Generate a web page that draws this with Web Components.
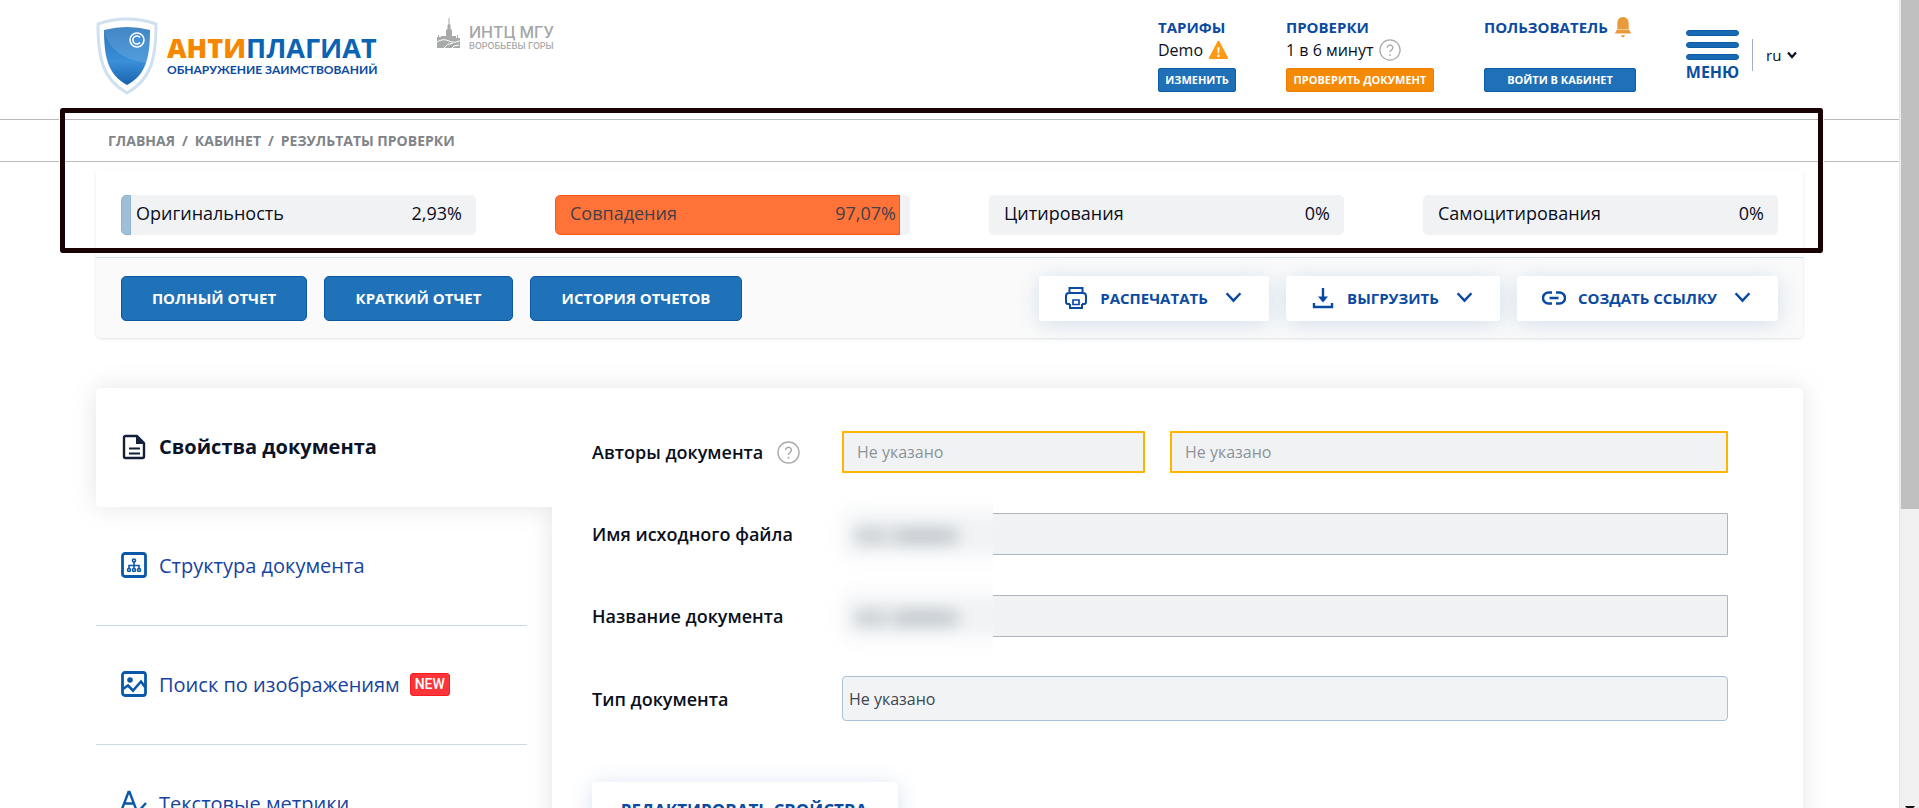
<!DOCTYPE html>
<html lang="ru">
<head>
<meta charset="utf-8">
<title>Антиплагиат — результаты проверки</title>
<style>
html, body { margin: 0; height: 100%; }
body { background: #fff; font-family: "Open Sans", "Noto Sans", sans-serif; color: #0a0f1c; overflow: hidden; }
</style>
</head>
<body>
<ap-page></ap-page>
<script>
function define(name, html, setup) {
  const t = document.createElement('template');
  t.innerHTML = html;
  customElements.define(name, class extends HTMLElement {
    constructor() {
      super();
      this.attachShadow({ mode: 'open' }).append(t.content.cloneNode(true));
    }
    connectedCallback() { if (setup) setup(this, this.shadowRoot); }
  });
}

const ICONS = {
  print: ['0 0 24 24', '<g fill="none" stroke="currentColor" stroke-width="2"><path d="M5.500 7V2h13v5M6 18H4a2 2 0 0 1-2-2v-6a3 3 0 0 1 3-3h14a3 3 0 0 1 3 3v6a2 2 0 0 1-2 2h-2"/><path d="M6 18v4h12v-4"/><path d="M9 14h6v4.500H9z" stroke-width="1.700"/></g>'],
  download: ['0 0 24 24', '<path d="M12 2v13M3 17v4h18v-4" fill="none" stroke="currentColor" stroke-width="2.4"/><path d="M7 10.500h10l-5 6z" fill="currentColor"/>'],
  link: ['0 0 24 24', '<path d="M10 6.500H6.500a5.500 5.500 0 0 0 0 11H10M14 6.500h3.500a5.500 5.500 0 0 1 0 11H14M7.500 12h9" fill="none" stroke="currentColor" stroke-width="2.500"/>'],
  chevron: ['0 0 16 16', '<path d="M1.500 4l6.500 7 6.500-7" fill="none" stroke="currentColor" stroke-width="2.300"/>'],
  caret: ['0 0 10 10', '<path d="M1 2.500l4 4.500 4-4.500" fill="none" stroke="currentColor" stroke-width="2.200"/>'],
  doc: ['0 0 26 26', '<path d="M4.500 2H16l7 7v13.500a1.500 1.500 0 0 1-1.500 1.500h-17A1.500 1.500 0 0 1 3 22.500v-19A1.500 1.500 0 0 1 4.500 2z" fill="none" stroke="currentColor" stroke-width="2.400" stroke-linejoin="round"/><path d="M15 2v8h8zM8 13.500h11v2H8zM8 18.500h11v2H8z" fill="currentColor"/>'],
  tree: ['0 0 26 26', '<rect x="1.500" y="1.500" width="23" height="23" rx="2.500" fill="none" stroke="currentColor" stroke-width="2.800"/><g fill="none" stroke="currentColor" stroke-width="1.600"><circle cx="13" cy="8.500" r="1.500"/><circle cx="8" cy="18" r="1.500"/><circle cx="13" cy="18" r="1.500"/><circle cx="18" cy="18" r="1.500"/><path d="M13 10v6M8 16v-2.500h10V16"/></g>'],
  image: ['0 0 26 26', '<rect x="1.500" y="1.500" width="23" height="23" rx="2.500" fill="none" stroke="currentColor" stroke-width="2.800"/><circle cx="9" cy="9" r="2.800" fill="currentColor"/><path d="M2 18l5-3.500 5 5 8-9 4 5.500" fill="none" stroke="currentColor" stroke-width="2.600"/>'],
  metrics: ['0 0 26 26', '<path d="M1 19L7.500 2h1L15 19M3.500 13.500h9M13 20l3 3 9-10" fill="none" stroke="currentColor" stroke-width="2.400"/>'],
  help: ['0 0 24 24', '<circle cx="12" cy="12" r="11" fill="#fff" stroke="#aaa" stroke-width="1.400"/><path d="M9 9.500a3 3 0 1 1 4.500 2.600c-1 .6-1.500 1.100-1.500 2.400" fill="none" stroke="#aaa" stroke-width="1.500"/><circle cx="12" cy="17.500" r="1" fill="#aaa"/>'],
  warning: ['0 0 22 22', '<path d="M10 1.500q1-1.500 2 0l9.500 18q.5 1.500-1 1.500h-19q-1.500 0-1-1.500z" fill="#ff9914"/><path d="M9.800 8h2.400l-.4 6.500h-1.600z" fill="#fff"/><circle cx="11" cy="17.300" r="1.400" fill="#fff"/>'],
  bell: ['0 0 18 24', '<path d="M9 1c4.500 0 6.200 3.500 6.200 7v6.500L17.500 18v1H.5v-1l2.300-3.500V8C2.800 4.500 4.500 1 9 1z" fill="#e99b3c"/><path d="M2.800 14.800h12.400" stroke="#f6cf9d"/><path d="M6.500 21h5l-2.500 2.500z" fill="#e88a1a"/>']
};

define('ap-icon', `<style>
:host { display: inline-block; width: 24px; height: 24px; flex: none; }
svg { display: block; width: 100%; height: 100%; }
</style><svg aria-hidden="true"></svg>`, (el, root) => {
  const [box, art] = ICONS[el.getAttribute('name')];
  const svg = root.querySelector('svg');
  svg.setAttribute('viewBox', box);
  svg.innerHTML = art;
});

define('ap-logo', `<style>
:host { display: block; }
a { display: flex; align-items: flex-start; gap: 9px; text-decoration: none; }
svg { width: 62px; height: 78px; flex: none; }
.words { padding-top: 15px; white-space: nowrap; width: 210px; }
.name { font-size: 27px; line-height: 32px; font-weight: 700; color: #0b63b3; }
.name b { color: #f58800; }
.tag { font-size: 12px; line-height: 12px; font-weight: 700; color: #0b4aa2; font-family: Lato, "Open Sans", sans-serif; }
</style>
<a href="#">
<svg viewBox="0 0 62 78" aria-hidden="true">
<defs><linearGradient id="g" x1="0" y1="0" x2="0" y2="1"><stop offset="0" stop-color="#2a76bd"/><stop offset=".6" stop-color="#3a8fd8"/><stop offset="1" stop-color="#1763ad"/></linearGradient></defs>
<path d="M31 2Q46 2 60 7C60 40 56 62 31 76C6 62 2 40 2 7Q16 2 31 2Z" fill="#fff" stroke="#cfe1f0" stroke-width="3"/>
<path d="M31 10Q42 10 54 13C54 40 50 58 31 68C12 58 8 40 8 13Q20 10 31 10Z" fill="url(#g)"/>
<path d="M8 15C14 34 30 44 52 46C54 36 54 24 54 13Q42 10 31 10Q20 10 8 13Z" fill="#fff" opacity=".12"/>
<circle cx="41" cy="23" r="7" fill="none" stroke="#fff" stroke-width="1.500"/>
<path d="M44 20.500a4 4 0 1 0 0 5" fill="none" stroke="#fff" stroke-width="1.500"/>
</svg>
<span class="words"><div class="name"><b>АНТИ</b>ПЛАГИАТ</div><div class="tag">ОБНАРУЖЕНИЕ ЗАИМСТВОВАНИЙ</div></span>
</a>`);

define('ap-partner', `<style>
:host { display: flex; gap: 8px; color: #a3a5a6; font-weight: 500; white-space: nowrap; }
svg { width: 24px; height: 31px; }
.a { font-size: 16px; line-height: 18px; padding-top: 5px; }
.b { font-size: 9px; line-height: 10px; }
.w { font-family: Inter, "Open Sans", sans-serif; }
</style>
<svg viewBox="0 0 24 31" aria-hidden="true"><path d="M11.500 0h1v6l1 1v4l1.500 1v6h4v2h1v-3h1v3h2v10H0V19h1v-2h1v2h2v-1h5v-6l1.500-1V7l1-1z" fill="#a7a9aa"/><path d="M0 24q6-4 12-1t12-1M6 31q4-6 10-6M14 31q2-4 8-4" fill="none" stroke="#fff" stroke-width="1"/></svg>
<div class="w"><div class="a">ИНТЦ МГУ</div><div class="b">ВОРОБЬЕВЫ ГОРЫ</div></div>`);

define('ap-account', `<style>
:host { display: block; white-space: nowrap; }
h2 { margin: 0; font-size: 15px; line-height: 20px; font-weight: 700; color: #0b4aa2; display: flex; align-items: center; gap: 6px; height: 20px; }
.info { display: flex; align-items: center; gap: 5px; height: 26px; margin: 0 0 5px; font-size: 16px; }
button { display: block; box-sizing: border-box; width: 100%; height: 24px; padding: 0 6px 1px; border: 1px solid #0b5cab; border-radius: 2px; background: #1f70b7; color: #fff; font: 700 11px "Open Sans", sans-serif; cursor: pointer; }
:host([accent]) button { background: #f58a07; border-color: #ee7d00; }
</style>
<h2><slot name="title"></slot></h2><div class="info"><slot></slot></div><button type="button"></button>`,
(el, root) => { root.querySelector('button').textContent = el.getAttribute('action'); });

define('ap-menu', `<style>
:host { display: flex; align-items: flex-start; }
button { border: 0; background: none; padding: 0; display: flex; flex-direction: column; gap: 5px; width: 53px; font: 700 16px/14px "Open Sans", sans-serif; color: #0b4fa3; cursor: pointer; align-items: center; }
i { display: block; height: 6px; width: 100%; border-radius: 3px; background: #1a69b3; border: 1px solid #0b5cab; box-sizing: border-box; }
i + i { margin-top: 1px; }
.lang { margin: 9px 0 0 13px; border-left: 1px solid #9fb0cc; height: 32px; display: flex; align-items: center; padding-left: 13px; }
select { appearance: none; border: 0; background: none; padding: 0; font: 15px "Open Sans", sans-serif; color: #0a0f1c; width: 21px; }
ap-icon { width: 10px; height: 10px; }
</style>
<button type="button"><i></i><i></i><i></i><span>МЕНЮ</span></button>
<div class="lang"><select aria-label="Язык"><option>ru</option></select><ap-icon name="caret"></ap-icon></div>`);

define('ap-header', `<style>
:host { display: flex; align-items: flex-start; box-sizing: border-box; height: 119px; padding: 17px 96px 0; }
ap-partner { margin: 1px 0 0 60px; }
.right { margin-left: auto; display: flex; }
.tariff { margin-right: 50px; width: 78px; }
.checks { margin-right: 50px; width: 148px; }
.user { margin-right: 50px; width: 152px; }
ap-menu { margin: 13px 6px 0 0; }
.warn { width: 21px; height: 20px; }
.help { width: 22px; height: 22px; }
.bell { width: 18px; height: 22px; }
</style>
<ap-logo></ap-logo><ap-partner></ap-partner>
<div class="right">
<ap-account class="tariff" action="ИЗМЕНИТЬ"><span slot="title">ТАРИФЫ</span>Demo<ap-icon class="warn" name="warning"></ap-icon></ap-account>
<ap-account class="checks" accent action="ПРОВЕРИТЬ ДОКУМЕНТ"><span slot="title">ПРОВЕРКИ</span>1 в 6 минут<ap-icon class="help" name="help"></ap-icon></ap-account>
<ap-account class="user" action="ВОЙТИ В КАБИНЕТ"><span slot="title">ПОЛЬЗОВАТЕЛЬ</span><ap-icon slot="title" class="bell" name="bell"></ap-icon></ap-account>
<ap-menu></ap-menu>
</div>`);

define('ap-breadcrumbs', `<style>
:host { display: block; border: solid #bbbbbf; border-width: 1px 0; }
nav { display: flex; gap: 7px; height: 41px; align-items: center; padding: 0 108px; font-size: 14px; font-weight: 700; color: #808488; white-space: nowrap; }
a { color: inherit; text-decoration: none; }
</style>
<nav aria-label="Путь"><a href="#">ГЛАВНАЯ</a><span>/</span><a href="#">КАБИНЕТ</a><span>/</span><a href="#">РЕЗУЛЬТАТЫ ПРОВЕРКИ</a></nav>`);

define('ap-score', `<style>
:host { display: block; position: relative; height: 40px; border-radius: 5px; background: #f1f2f4; overflow: hidden; flex: 1; }
.fill { position: absolute; inset: 0 auto 0 0; box-sizing: border-box; background: var(--fill, none); border: 1px solid var(--edge, transparent); border-radius: 5px 0 0 5px; }
.row { position: relative; height: 36px; display: flex; justify-content: space-between; align-items: center; padding: 0 14px 0 15px; font-size: 18px; white-space: nowrap; }
:host([tone=match]) .row { color: #43404a; }
</style>
<div class="fill"></div><div class="row"><span><slot></slot></span><span class="v"></span></div>`, (el, root) => {
  root.querySelector('.fill').style.width = el.getAttribute('fill') + '%';
  if (el.getAttribute('fill') === '0') root.querySelector('.fill').style.display = 'none';
  root.querySelector('.v').textContent = el.getAttribute('value');
});

define('ap-button', `<style>
:host { display: block; }
button { display: flex; align-items: center; justify-content: center; box-sizing: border-box; width: 100%; height: 45px; border-radius: 5px; border: 1px solid #0b58a8; background: #1f72b8; color: #fff; font: 700 15px "Open Sans", sans-serif; white-space: nowrap; padding: 0 30px 2px; cursor: pointer; }
:host([ghost]) button { border: 0; border-radius: 3px; background: #fff; color: #0b4aa2; padding: 0 28px 2px 26px; box-shadow: 0 3px 22px rgba(60,120,180,.2); }
:host([large]) button { font-size: 17px; height: 58px; }
.icon { margin-right: 12px; }
.chev { width: 17px; height: 17px; margin-left: 17px; }
</style><button type="button"><slot></slot></button>`, (el, root) => {
  const b = root.querySelector('button');
  if (el.hasAttribute('icon')) b.insertAdjacentHTML('afterbegin', '<ap-icon class="icon" name="' + el.getAttribute('icon') + '"></ap-icon>');
  if (el.hasAttribute('menu')) b.insertAdjacentHTML('beforeend', '<ap-icon class="chev" name="chevron"></ap-icon>');
});

define('ap-summary', `<style>
:host { display: block; margin: 8px 96px 0; border-radius: 5px; box-shadow: 0 1px 3px rgba(0,0,0,.12); }
.scores { display: flex; gap: 79px; padding: 25px 25px 22px; background: #fff; }
.tools { display: flex; gap: 17px; padding: 18px 25px 17px; border-top: 1px solid #d3e0ea; background: #fafafa; border-radius: 0 0 5px 5px; }
.gap { flex: 1; }
.one { --fill: #9dbfd8; --edge: #8eb2d0; }
.two { --fill: #ff7339; --edge: #ff5412; }
.b1 { width: 186px; } .b2 { width: 189px; } .b3 { width: 212px; }
.g1 { width: 230px; } .g2 { width: 214px; } .g3 { width: 261px; }
</style>
<div class="scores">
<ap-score class="one" fill="2.93" value="2,93%">Оригинальность</ap-score>
<ap-score class="two" tone="match" fill="97.07" value="97,07%">Совпадения</ap-score>
<ap-score fill="0" value="0%">Цитирования</ap-score>
<ap-score fill="0" value="0%">Самоцитирования</ap-score>
</div>
<div class="tools">
<ap-button class="b1">ПОЛНЫЙ ОТЧЕТ</ap-button><ap-button class="b2">КРАТКИЙ ОТЧЕТ</ap-button><ap-button class="b3">ИСТОРИЯ ОТЧЕТОВ</ap-button>
<span class="gap"></span>
<ap-button ghost class="g1" icon="print" menu>РАСПЕЧАТАТЬ</ap-button><ap-button ghost class="g2" icon="download" menu>ВЫГРУЗИТЬ</ap-button><ap-button ghost class="g3" icon="link" menu>СОЗДАТЬ ССЫЛКУ</ap-button>
</div>`);

define('ap-tab', `<style>
:host { display: block; }
a { display: flex; align-items: center; box-sizing: border-box; height: 119px; margin-right: 25px; padding: 0 25px 2px; border-bottom: 1px solid #c9dbe6; color: #1743a0; text-decoration: none; font-size: 20px; white-space: nowrap; }
:host([active]) a { margin: 0; border: 0; color: #0a1428; font-weight: 700; }
ap-icon { width: 26px; height: 26px; margin-right: 12px; color: #0b58a8; }
:host([active]) ap-icon { color: #12203a; }
.new { margin-left: 10px; width: 40px; box-sizing: border-box; text-align: center; border-radius: 3px; background: #fb3539; border: 1px solid #fb1c22; color: #fff; font: 500 14px/21px Roboto, sans-serif; }
</style><a href="#"><slot></slot></a>`, (el, root) => {
  const a = root.querySelector('a');
  a.insertAdjacentHTML('afterbegin', '<ap-icon name="' + el.getAttribute('icon') + '"></ap-icon>');
  if (el.hasAttribute('badge')) a.insertAdjacentHTML('beforeend', '<span class="new">NEW</span>');
});

define('ap-field', `<style>
:host { display: grid; grid-template-columns: 250px 1fr; align-items: center; height: 44px; }
.label { display: flex; align-items: center; gap: 14px; font-size: 18px; font-weight: 600; white-space: nowrap; }
.label ap-icon { width: 23px; height: 23px; }
.box { display: grid; gap: 25px; position: relative; }
:host([pair]) .box { grid-template-columns: 303fr 558fr; }
input, select { box-sizing: border-box; width: 100%; min-width: 0; height: 42px; margin: 0; padding: 0 13px; border: 1px solid #aeb5bd; border-radius: 1px; background: #f0f2f4; font: 16px "Open Sans", sans-serif; color: #3c4650; }
:host([pair]) input { border: 2px solid #ffb400; }
input::placeholder { color: #8d9298; opacity: 1; }
select { appearance: none; height: 45px; border-color: #a9c1d6; border-radius: 4px; background: #f1f3f4; padding: 0 6px; }
.veil { position: absolute; left: -20px; top: -20px; width: 171px; height: 82px; overflow: hidden; background: #fff; }
.veil::before { content: ""; position: absolute; left: 22px; right: -40px; top: 20px; bottom: 20px; background: #f0f2f4; filter: blur(10px); }
.veil::after { content: ""; position: absolute; left: 32px; width: 106px; top: 34px; height: 18px; border-radius: 8px; background: linear-gradient(90deg, #c6ccd1 0 25%, #dfe2e5 33%, #bcc3c9 45% 80%, #c9ced3); filter: blur(7px); opacity: .8; }
</style><label class="label" for="f"></label><div class="box"></div>`, (el, root) => {
  const label = root.querySelector('.label'), box = root.querySelector('.box');
  label.textContent = el.getAttribute('label');
  if (el.hasAttribute('help')) label.insertAdjacentHTML('beforeend', '<ap-icon name="help"></ap-icon>');
  if (el.hasAttribute('pair')) box.innerHTML = '<input id="f" placeholder="Не указано"><input aria-label="Второй автор" placeholder="Не указано">';
  else if (el.hasAttribute('choice')) box.innerHTML = '<select id="f"><option>Не указано</option></select>';
  else box.innerHTML = '<input id="f"><div class="veil"></div>';
});

define('ap-document', `<style>
:host { display: grid; grid-template-columns: 456px 1fr; margin: 50px 96px 0; position: relative; }
/* L-shaped sheet: the active tab joined with the panel, under one shadow */
.sheet { position: absolute; inset: 0; z-index: 0; display: grid; grid-template-columns: 456px 1fr; align-items: start; filter: drop-shadow(0 0 12px rgba(0,0,0,.1)); }
.sheet::before, .sheet::after { content: ""; background: #fff; }
.sheet::before { height: 119px; border-radius: 5px 0 0 5px; }
.sheet::after { height: 100%; border-radius: 0 5px 5px 0; }
.tabs, .panel { position: relative; z-index: 1; }
.panel { padding: 42px 75px 60px 40px; }
form { display: grid; gap: 38px; }
.edit { width: 306px; margin-top: 24px; }
</style>
<div class="sheet"></div>
<div class="tabs">
<ap-tab active icon="doc">Свойства документа</ap-tab>
<ap-tab icon="tree">Структура документа</ap-tab>
<ap-tab icon="image" badge>Поиск по изображениям</ap-tab>
<ap-tab icon="metrics">Текстовые метрики</ap-tab>
</div>
<div class="panel"><form>
<ap-field pair help label="Авторы документа"></ap-field>
<ap-field label="Имя исходного файла"></ap-field>
<ap-field label="Название документа"></ap-field>
<ap-field choice label="Тип документа"></ap-field>
<ap-button ghost large class="edit">РЕДАКТИРОВАТЬ СВОЙСТВА</ap-button>
</form></div>`);

define('ap-scrollbar', `<style>
:host { display: block; background: #f0f0f0; border-left: 1px solid #e6e6e6; box-sizing: border-box; position: relative; }
.thumb { height: 63%; margin-left: 1px; background: #c0c0c0; }
.arrow { position: absolute; bottom: -4px; left: 5px; border: 5px solid transparent; border-top: 6px solid #111; border-bottom: 0; }
</style><div class="thumb"></div><div class="arrow"></div>`);

define('ap-page', `<style>
:host { display: grid; grid-template-columns: 1fr 20px; height: 100vh; overflow: hidden; }
main { min-width: 0; overflow: hidden; position: relative; }
.frame { position: absolute; left: 60px; right: 76px; top: 108px; height: 145px; box-sizing: border-box; border: 5px solid #1a0204; border-radius: 2px; pointer-events: none; outline: 1px solid #fff; z-index: 3; }
</style>
<main><ap-header></ap-header><ap-breadcrumbs></ap-breadcrumbs><ap-summary></ap-summary><ap-document></ap-document><div class="frame"></div></main>
<ap-scrollbar></ap-scrollbar>`);
</script>
</body>
</html>
